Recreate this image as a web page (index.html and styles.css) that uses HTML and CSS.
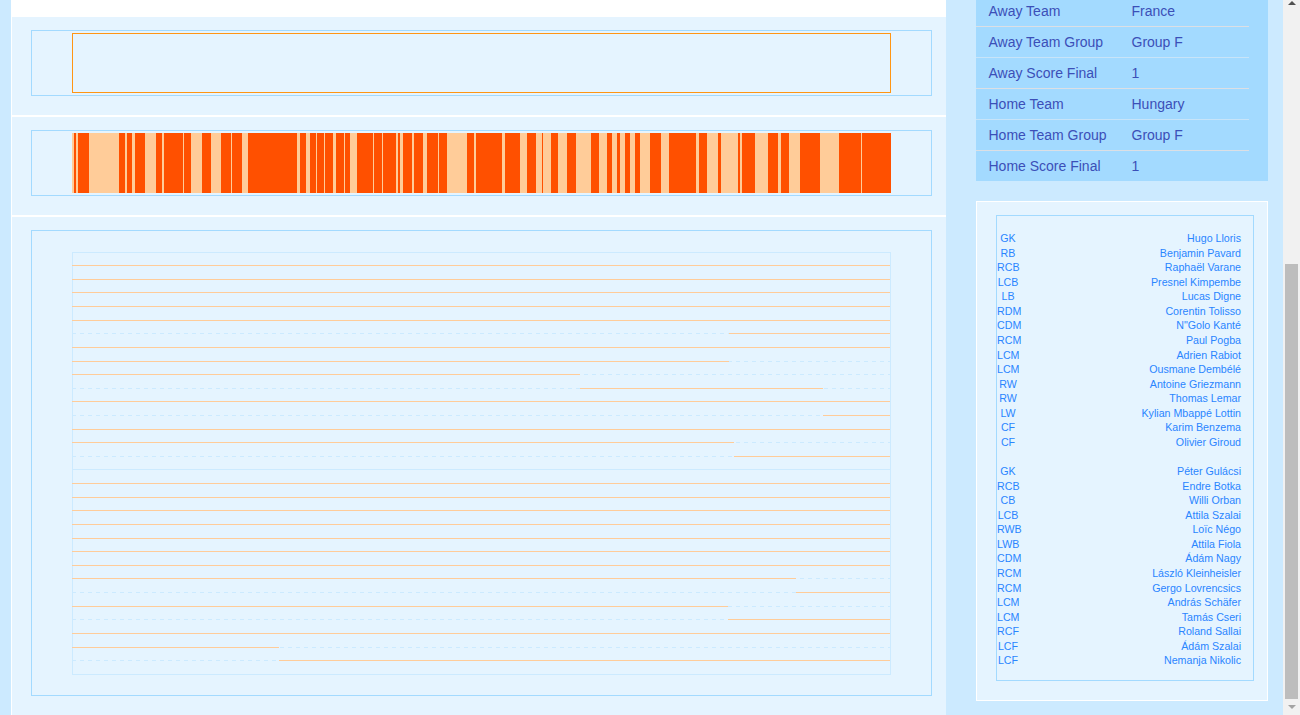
FILE: index.html
```html
<!DOCTYPE html>
<html lang="en">
<head>
<meta charset="utf-8">
<title>Match report</title>
<link rel="stylesheet" href="styles.css">
</head>
<body>
<div class="page">
  <main class="main">
    <div class="top-cap"></div>
    <section class="panel">
      <div class="box"><div class="empty-plot"></div></div>
    </section>
    <section class="panel">
      <div class="box">
        <svg class="plot" width="819" height="60" viewBox="0 0 819 60" shape-rendering="crispEdges">
          <rect class="bar-bg" width="819" height="60"/>
          <g class="bar-on">
            <rect x="2" width="2" height="60"/><rect x="6" width="11" height="60"/><rect x="47" width="6" height="60"/><rect x="55" width="5" height="60"/><rect x="63" width="10" height="60"/><rect x="84" width="6" height="60"/><rect x="92" width="19" height="60"/><rect x="112" width="7" height="60"/><rect x="130" width="9" height="60"/><rect x="149" width="10" height="60"/><rect x="160" width="10" height="60"/><rect x="176" width="49" height="60"/><rect x="228" width="6" height="60"/><rect x="238" width="6" height="60"/><rect x="245" width="7" height="60"/><rect x="253" width="8" height="60"/><rect x="264" width="8" height="60"/><rect x="273" width="5" height="60"/><rect x="285" width="16" height="60"/><rect x="302" width="8" height="60"/><rect x="311" width="13" height="60"/><rect x="326" width="2" height="60"/><rect x="331" width="9" height="60"/><rect x="342" width="9" height="60"/><rect x="355" width="11" height="60"/><rect x="367" width="8" height="60"/><rect x="395" width="7" height="60"/><rect x="404" width="26" height="60"/><rect x="433" width="15" height="60"/><rect x="455" width="9" height="60"/><rect x="470" width="1" height="60"/><rect x="479" width="7" height="60"/><rect x="495" width="9" height="60"/><rect x="519" width="8" height="60"/><rect x="535" width="5" height="60"/><rect x="545" width="3" height="60"/><rect x="553" width="5" height="60"/><rect x="563" width="5" height="60"/><rect x="578" width="11" height="60"/><rect x="597" width="27" height="60"/><rect x="627" width="8" height="60"/><rect x="646" width="3" height="60"/><rect x="666" width="2" height="60"/><rect x="670" width="13" height="60"/><rect x="696" width="10" height="60"/><rect x="709" width="8" height="60"/><rect x="728" width="20" height="60"/><rect x="767" width="22" height="60"/><rect x="790" width="29" height="60"/>
          </g>
        </svg>
      </div>
    </section>
    <section class="panel panel-last">
      <div class="box box-tall">
        <svg class="plot" width="819" height="423" viewBox="0 0 819 423" shape-rendering="crispEdges">
          <rect class="frame" x="0.5" y="0.5" width="818" height="422"/>
          <g class="dash">
            <line x1="0" x2="818" y1="81.5" y2="81.5"/>
            <line x1="0" x2="818" y1="109.5" y2="109.5"/>
            <line x1="0" x2="818" y1="122.5" y2="122.5"/>
            <line x1="0" x2="818" y1="136.5" y2="136.5"/>
            <line x1="0" x2="818" y1="163.5" y2="163.5"/>
            <line x1="0" x2="818" y1="190.5" y2="190.5"/>
            <line x1="0" x2="818" y1="204.5" y2="204.5"/>
            <line x1="0" x2="818" y1="326.5" y2="326.5"/>
            <line x1="0" x2="818" y1="340.5" y2="340.5"/>
            <line x1="0" x2="818" y1="354.5" y2="354.5"/>
            <line x1="0" x2="818" y1="367.5" y2="367.5"/>
            <line x1="0" x2="818" y1="395.5" y2="395.5"/>
            <line x1="0" x2="818" y1="408.5" y2="408.5"/>
          </g>
          <g class="run">
            <line x1="0" x2="818" y1="13.5" y2="13.5"/>
            <line x1="0" x2="818" y1="27.5" y2="27.5"/>
            <line x1="0" x2="818" y1="40.5" y2="40.5"/>
            <line x1="0" x2="818" y1="54.5" y2="54.5"/>
            <line x1="0" x2="818" y1="68.5" y2="68.5"/>
            <line x1="657" x2="818" y1="81.5" y2="81.5"/>
            <line x1="0" x2="818" y1="95.5" y2="95.5"/>
            <line x1="0" x2="657" y1="109.5" y2="109.5"/>
            <line x1="0" x2="508" y1="122.5" y2="122.5"/>
            <line x1="508" x2="751" y1="136.5" y2="136.5"/>
            <line x1="0" x2="818" y1="149.5" y2="149.5"/>
            <line x1="751" x2="818" y1="163.5" y2="163.5"/>
            <line x1="0" x2="818" y1="177.5" y2="177.5"/>
            <line x1="0" x2="662" y1="190.5" y2="190.5"/>
            <line x1="662" x2="818" y1="204.5" y2="204.5"/>
            <line x1="0" x2="818" y1="231.5" y2="231.5"/>
            <line x1="0" x2="818" y1="245.5" y2="245.5"/>
            <line x1="0" x2="818" y1="258.5" y2="258.5"/>
            <line x1="0" x2="818" y1="272.5" y2="272.5"/>
            <line x1="0" x2="818" y1="286.5" y2="286.5"/>
            <line x1="0" x2="818" y1="299.5" y2="299.5"/>
            <line x1="0" x2="818" y1="313.5" y2="313.5"/>
            <line x1="0" x2="724" y1="326.5" y2="326.5"/>
            <line x1="724" x2="818" y1="340.5" y2="340.5"/>
            <line x1="0" x2="656" y1="354.5" y2="354.5"/>
            <line x1="656" x2="818" y1="367.5" y2="367.5"/>
            <line x1="0" x2="818" y1="381.5" y2="381.5"/>
            <line x1="0" x2="207" y1="395.5" y2="395.5"/>
            <line x1="207" x2="818" y1="408.5" y2="408.5"/>
          </g>
          <line class="run-alt" x1="0" x2="818" y1="217.5" y2="217.5"/>
        </svg>
      </div>
    </section>
  </main>

  <aside class="side">
    <div class="facts">
      <div class="fact fact-cut"><span class="fact-key">Away Team</span><span>France</span></div>
      <div class="fact fact-alt"><span class="fact-key">Away Team Group</span><span>Group F</span></div>
      <div class="fact"><span class="fact-key">Away Score Final</span><span>1</span></div>
      <div class="fact fact-alt"><span class="fact-key">Home Team</span><span>Hungary</span></div>
      <div class="fact"><span class="fact-key">Home Team Group</span><span>Group F</span></div>
      <div class="fact fact-last"><span class="fact-key">Home Score Final</span><span>1</span></div>
    </div>
    <div class="card">
      <div class="roster">
        <div class="player"><span class="pos">GK</span><span>Hugo Lloris</span></div>
        <div class="player"><span class="pos">RB</span><span>Benjamin Pavard</span></div>
        <div class="player"><span class="pos">RCB</span><span>Raphaël Varane</span></div>
        <div class="player"><span class="pos">LCB</span><span>Presnel Kimpembe</span></div>
        <div class="player"><span class="pos">LB</span><span>Lucas Digne</span></div>
        <div class="player"><span class="pos">RDM</span><span>Corentin Tolisso</span></div>
        <div class="player"><span class="pos">CDM</span><span>N"Golo Kanté</span></div>
        <div class="player"><span class="pos">RCM</span><span>Paul Pogba</span></div>
        <div class="player"><span class="pos">LCM</span><span>Adrien Rabiot</span></div>
        <div class="player"><span class="pos">LCM</span><span>Ousmane Dembélé</span></div>
        <div class="player"><span class="pos">RW</span><span>Antoine Griezmann</span></div>
        <div class="player"><span class="pos">RW</span><span>Thomas Lemar</span></div>
        <div class="player"><span class="pos">LW</span><span>Kylian Mbappé Lottin</span></div>
        <div class="player"><span class="pos">CF</span><span>Karim Benzema</span></div>
        <div class="player"><span class="pos">CF</span><span>Olivier Giroud</span></div>
        <div class="player player-gap"></div>
        <div class="player"><span class="pos">GK</span><span>Péter Gulácsi</span></div>
        <div class="player"><span class="pos">RCB</span><span>Endre Botka</span></div>
        <div class="player"><span class="pos">CB</span><span>Willi Orban</span></div>
        <div class="player"><span class="pos">LCB</span><span>Attila Szalai</span></div>
        <div class="player"><span class="pos">RWB</span><span>Loïc Négo</span></div>
        <div class="player"><span class="pos">LWB</span><span>Attila Fiola</span></div>
        <div class="player"><span class="pos">CDM</span><span>Ádám Nagy</span></div>
        <div class="player"><span class="pos">RCM</span><span>László Kleinheisler</span></div>
        <div class="player"><span class="pos">RCM</span><span>Gergo Lovrencsics</span></div>
        <div class="player"><span class="pos">LCM</span><span>András Schäfer</span></div>
        <div class="player"><span class="pos">LCM</span><span>Tamás Cseri</span></div>
        <div class="player"><span class="pos">RCF</span><span>Roland Sallai</span></div>
        <div class="player"><span class="pos">LCF</span><span>Ádám Szalai</span></div>
        <div class="player"><span class="pos">LCF</span><span>Nemanja Nikolic</span></div>
      </div>
    </div>
  </aside>

  <div class="scrollbar">
    <div class="arrow arrow-up"></div>
    <div class="thumb"></div>
    <div class="arrow arrow-down"></div>
  </div>
</div>
</body>
</html>
```

FILE: styles.css
```css
* { box-sizing: border-box; }
html, body { margin: 0; padding: 0; height: 715px; overflow: hidden; }
body { font-family: "Liberation Sans", Arial, sans-serif; }

.page {
  display: flex;
  width: 1300px;
  height: 715px;
  overflow: hidden;
  background: #cceaff;
}

.main {
  flex: none;
  width: 935px;
  height: 715px;
  margin-left: 11px;
  padding-left: 1px;
  background: #fff;
  display: flex;
  flex-direction: column;
  gap: 2px;
  overflow: hidden;
}
.top-cap { flex: none; height: 15px; }

.panel {
  flex: none;
  height: 98px;
  padding: 13px 14px 19px 19px;
  background: #e5f4ff;
}
.panel-last { flex: 1; height: auto; }

.box {
  height: 66px;
  padding: 2px 40px;
  border: 1px solid #a3daff;
}
.box-tall { height: 466px; padding: 21px 40px 20px; }

.empty-plot { width: 819px; height: 60px; border: 1px solid #ff9614; }
.plot { display: block; }

.bar-bg { fill: #ffcc99; }
.bar-on { fill: #ff5000; }
.frame { fill: none; stroke: #cceaff; stroke-width: 1; }
.dash line { stroke: #cceaff; stroke-width: 1; stroke-dasharray: 4 4; }
.run line { stroke: #ffcc99; stroke-width: 1; }
.run-alt { stroke: #cceaff; stroke-width: 1; }

.side {
  flex: none;
  width: 292px;
  margin-left: 30px;
  display: flex;
  flex-direction: column;
  gap: 20px;
}
.facts {
  flex: none;
  background: #a3daff;
  padding: 0 19px 0 12.5px;
  font-size: 14px;
  color: #3b4fb8;
}
.fact {
  display: flex;
  height: 31px;
  margin-left: -12.5px;
  padding-left: 12.5px;
  line-height: 30px;
  border-bottom: 1px solid #dcdfe4;
}
.fact-cut { height: 27px; line-height: 22px; }
.fact-alt { border-bottom-color: #c8e4f8; }
.fact-last { height: 30px; border-bottom: 0; }
.fact-key { flex: none; width: 143px; }

.card {
  flex: none;
  height: 500px;
  padding: 13px 13px 19px 19px;
  background: #e5f4ff;
  border: 1px solid #fff;
}
.roster {
  height: 466px;
  padding: 15px 12px 0 0;
  border: 1px solid #a3daff;
  font-size: 10.67px;
  color: #2a85ff;
}
.player {
  display: flex;
  justify-content: space-between;
  height: 14.57px;
  line-height: 14.57px;
  white-space: nowrap;
}
.pos { flex: none; width: 22px; text-align: center; }

.scrollbar {
  flex: none;
  width: 17px;
  margin-left: 15px;
  height: 715px;
  background: #f1f1f1;
  display: flex;
  flex-direction: column;
  align-items: center;
  justify-content: space-between;
  position: relative;
}
.arrow { width: 0; height: 0; border-left: 4px solid transparent; border-right: 4px solid transparent; }
.arrow-up { margin-top: 1px; border-bottom: 4px solid #505050; }
.arrow-down { margin-bottom: 6px; border-top: 4px solid #a3a3a3; }
.thumb {
  position: absolute;
  top: 264px;
  left: 2px;
  width: 13px;
  height: 435px;
  background: #bdbdbd;
}
```
